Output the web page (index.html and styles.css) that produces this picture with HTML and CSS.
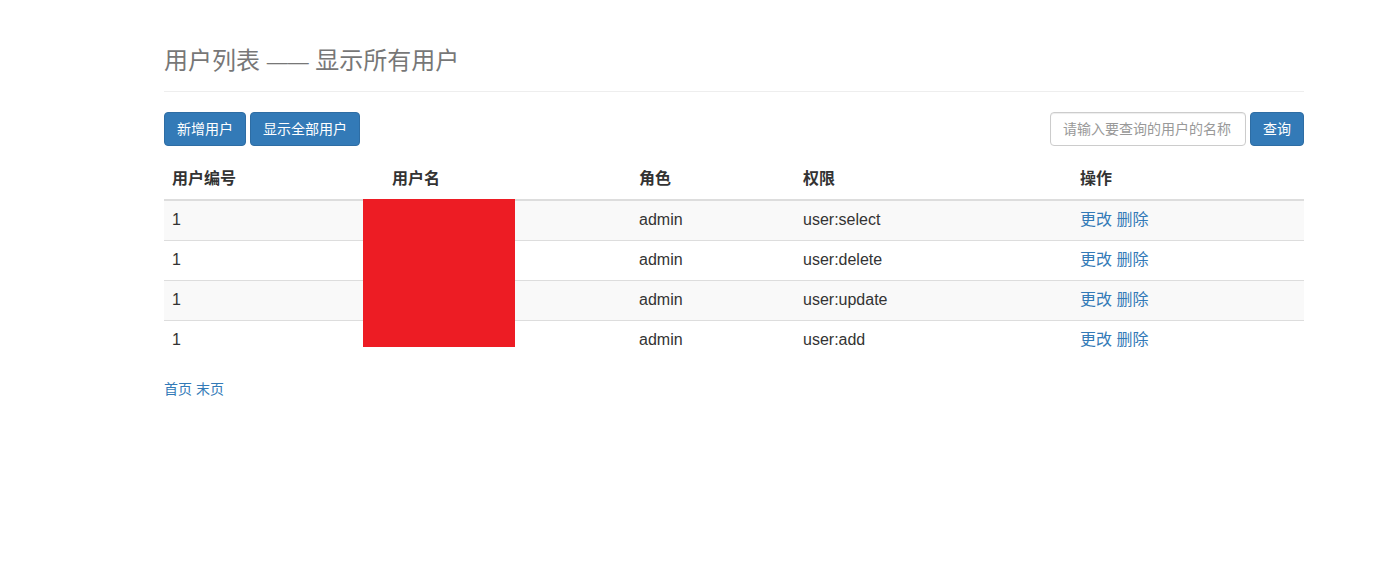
FILE: index.html
```html
<!DOCTYPE html>
<html lang="zh-CN">
<head>
<meta charset="utf-8">
<title>用户列表</title>
<link rel="stylesheet" href="styles.css">
</head>
<body>
<div class="container">
  <h3 class="page-header">用户列表 <span class="dash">——</span> 显示所有用户</h3>
  <div class="toolbar">
    <div class="btn-group">
      <button class="btn">新增用户</button>
      <button class="btn">显示全部用户</button>
    </div>
    <form class="search">
      <input class="search-input" type="text" placeholder="请输入要查询的用户的名称">
      <button class="btn" type="button">查询</button>
    </form>
  </div>
  <div class="table-wrap">
    <table class="table">
      <colgroup>
        <col class="c1"><col class="c2"><col class="c3"><col class="c4"><col class="c5">
      </colgroup>
      <thead>
        <tr><th>用户编号</th><th>用户名</th><th>角色</th><th>权限</th><th>操作</th></tr>
      </thead>
      <tbody>
        <tr><td>1</td><td></td><td>admin</td><td>user:select</td><td><a href="#">更改</a> <a href="#">删除</a></td></tr>
        <tr><td>1</td><td></td><td>admin</td><td>user:delete</td><td><a href="#">更改</a> <a href="#">删除</a></td></tr>
        <tr><td>1</td><td></td><td>admin</td><td>user:update</td><td><a href="#">更改</a> <a href="#">删除</a></td></tr>
        <tr><td>1</td><td></td><td>admin</td><td>user:add</td><td><a href="#">更改</a> <a href="#">删除</a></td></tr>
      </tbody>
    </table>
    <div class="redact"></div>
  </div>
  <div class="pager"><a href="#">首页</a> <a href="#">末页</a></div>
</div>
</body>
</html>
```
FILE: styles.css
```css
* { box-sizing: border-box; }
html, body { margin: 0; padding: 0; background: #fff; }
body {
  font-family: "Liberation Sans", Arial, "Noto Sans CJK SC", sans-serif;
  font-size: 14px;
  line-height: 1.42857;
  color: #333;
}
.container {
  width: 1140px;
  margin-left: 164px;
}
.page-header {
  margin: 48px 0 20px;
  padding-bottom: 17px;
  border-bottom: 1px solid #eee;
  font-size: 24px;
  font-weight: 400;
  line-height: 26px;
  color: #777;
}
.dash { font-size: 21px; line-height: 16px; }
.toolbar {
  display: flex;
  justify-content: space-between;
  align-items: center;
}
.btn-group, .search {
  display: flex;
  gap: 4px;
  margin: 0;
}
.btn {
  height: 34px;
  padding: 6px 12px;
  font-family: inherit;
  font-size: 14px;
  line-height: 20px;
  color: #fff;
  background: #337ab7;
  border: 1px solid #2e6da4;
  border-radius: 4px;
  cursor: pointer;
}
.search-input {
  width: 196px;
  height: 34px;
  padding: 6px 12px;
  font-family: inherit;
  font-size: 14px;
  line-height: 20px;
  color: #555;
  border: 1px solid #ccc;
  border-radius: 4px;
  box-shadow: inset 0 1px 1px rgba(0,0,0,.075);
}
.search-input::placeholder { color: #999; }
.table-wrap {
  position: relative;
  margin-top: 14px;
}
.table {
  width: 100%;
  border-collapse: collapse;
  border-spacing: 0;
  font-size: 16px;
  table-layout: fixed;
}
.c1 { width: 220px; }
.c2 { width: 247px; }
.c3 { width: 164px; }
.c4 { width: 277px; }
.c5 { width: 232px; }
.table th, .table td {
  padding: 7px 8px 9px;
  line-height: 23px;
  text-align: left;
  vertical-align: top;
}
.table th {
  font-weight: 700;
  border-bottom: 2px solid #ddd;
}
.table td { border-top: 1px solid #ddd; }
.table tbody tr:nth-child(odd) { background: #f9f9f9; }
a { color: #337ab7; text-decoration: none; }
.redact {
  position: absolute;
  left: 199px;
  top: 39px;
  width: 152px;
  height: 148px;
  background: #ed1c24;
}
.pager {
  margin-top: 19px;
  line-height: 20px;
}
```
